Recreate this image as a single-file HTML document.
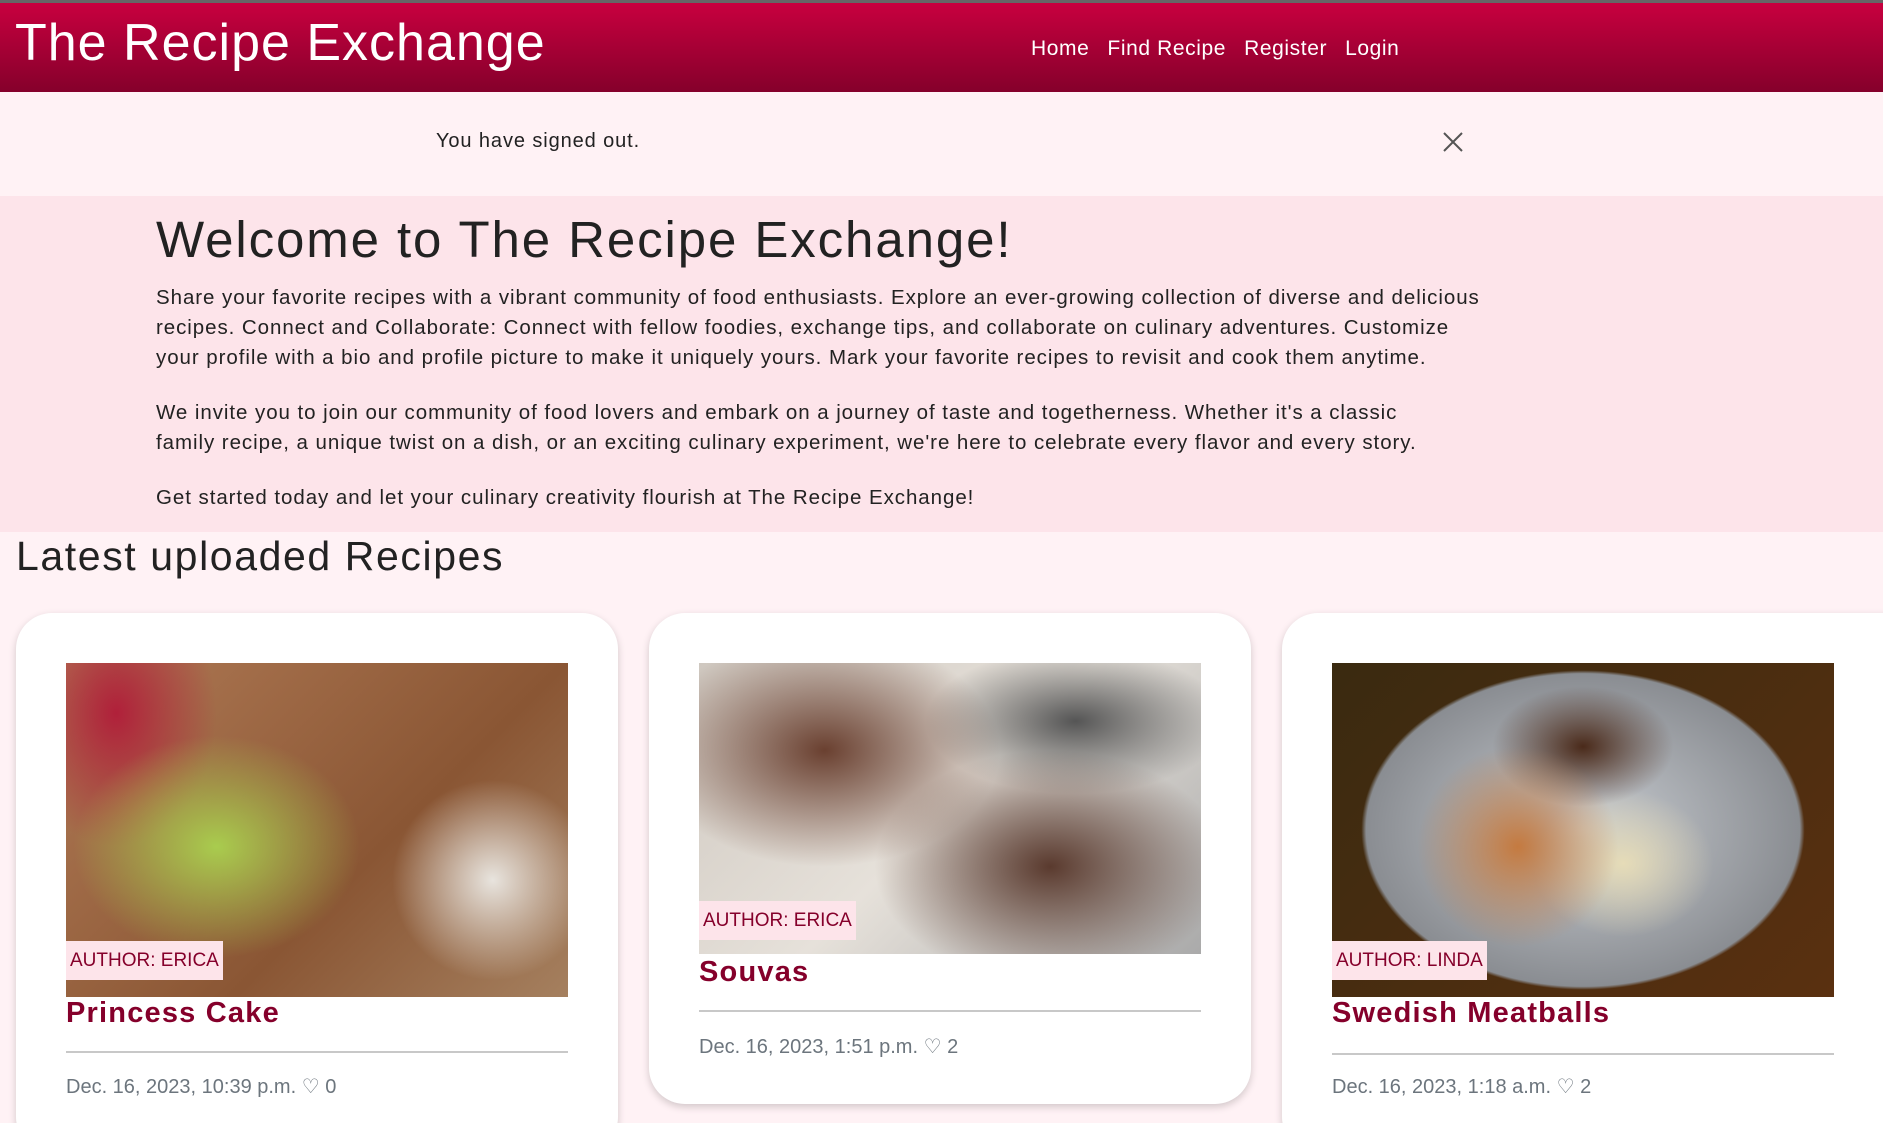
<!DOCTYPE html>
<html style="overflow:hidden"><head><meta charset="utf-8"><style>
*{margin:0;padding:0;box-sizing:border-box}
html,body{width:1883px;height:1123px;overflow:hidden}
body{background:#fff2f5;font-family:"Liberation Sans",sans-serif;position:relative}
.nav{position:absolute;left:0;top:0;width:1883px;height:92px;background:linear-gradient(#c8003f,#85002b);border-top:3px solid #666}
.brand{position:absolute;left:15px;top:10px;font-size:52px;color:#fff;letter-spacing:1px}
.links{position:absolute;left:1031px;top:34px;font-size:21px;color:#fff;letter-spacing:0.6px}
.links span{margin-right:18px}
.alert{position:absolute;left:0;top:92px;width:1883px;height:104px;background:#fff2f5}
.alert p{position:absolute;left:436px;top:38px;font-size:20px;color:#222;letter-spacing:0.9px}
.hero{position:absolute;left:0;top:196px;width:1883px;height:336px;background:#fde4ea}
.hero h1{position:absolute;left:156px;top:14px;font-size:51px;font-weight:normal;color:#222;letter-spacing:1.9px}
.hero p{position:absolute;left:156px;font-size:20.5px;line-height:30px;color:#222;width:1700px;letter-spacing:0.94px;white-space:nowrap}
h2{position:absolute;left:16px;top:533px;font-size:41px;font-weight:normal;color:#222;letter-spacing:1.6px}
.card{position:absolute;top:613px;width:602px;background:#fff;border-radius:36px;box-shadow:0 3px 8px rgba(0,0,0,.18)}
.img{position:absolute;left:50px;top:50px;width:502px}
.badge{position:absolute;left:50px;background:#fde4ea;color:#85002b;font-size:19px;padding:9px 4px;height:39px}
.title{position:absolute;left:50px;font-size:29px;font-weight:bold;color:#85002b;letter-spacing:1.2px}
.hr{position:absolute;left:50px;width:502px;height:2px;background:#c8c8c8}
.date{position:absolute;left:50px;font-size:20px;color:#6c757d}
</style></head><body>
<div class="nav"><div class="brand">The Recipe Exchange</div>
<div class="links"><span>Home</span><span>Find Recipe</span><span>Register</span><span>Login</span></div></div>
<div class="alert"><p>You have signed out.</p>
<svg style="position:absolute;left:1443px;top:40px" width="20" height="20" viewBox="0 0 20 20"><path d="M1 1L19 19M19 1L1 19" stroke="#555" stroke-width="2"/></svg></div>
<div class="hero"><h1>Welcome to The Recipe Exchange!</h1>
<p style="top:87px">Share your favorite recipes with a vibrant community of food enthusiasts. Explore an ever-growing collection of diverse and delicious<br>recipes. Connect and Collaborate: Connect with fellow foodies, exchange tips, and collaborate on culinary adventures. Customize<br>your profile with a bio and profile picture to make it uniquely yours. Mark your favorite recipes to revisit and cook them anytime.</p>
<p style="top:202px">We invite you to join our community of food lovers and embark on a journey of taste and togetherness. Whether it's a classic<br>family recipe, a unique twist on a dish, or an exciting culinary experiment, we're here to celebrate every flavor and every story.</p>
<p style="top:287px">Get started today and let your culinary creativity flourish at The Recipe Exchange!</p></div>
<h2>Latest uploaded Recipes</h2>

<div class="card" style="left:16px;height:540px">
<div class="img" style="height:334px;background:radial-gradient(ellipse 30% 35% at 30% 55%,#a9cc4e,transparent 95%),radial-gradient(ellipse 20% 40% at 10% 15%,#b0203a,transparent),radial-gradient(ellipse 20% 30% at 85% 65%,#e8e4de,transparent),linear-gradient(135deg,#b07a55,#8a5634 60%,#a5805f)"></div>
<div class="badge" style="top:328px">AUTHOR: ERICA</div>
<div class="title" style="top:384px">Princess Cake</div>
<div class="hr" style="top:438px"></div>
<div class="date" style="top:461px">Dec. 16, 2023, 10:39 p.m. ♡ 0</div></div>

<div class="card" style="left:649px;height:491px">
<div class="img" style="height:291px;background:radial-gradient(ellipse 35% 40% at 25% 30%,#6a4030,transparent),radial-gradient(ellipse 35% 40% at 70% 70%,#5a3a2e,transparent),radial-gradient(ellipse 30% 25% at 75% 20%,#555,transparent),linear-gradient(135deg,#cfc8c0,#e6e1da 50%,#aaa)"></div>
<div class="badge" style="top:288px">AUTHOR: ERICA</div>
<div class="title" style="top:343px">Souvas</div>
<div class="hr" style="top:397px"></div>
<div class="date" style="top:421px">Dec. 16, 2023, 1:51 p.m. ♡ 2</div></div>

<div class="card" style="left:1282px;width:640px;height:540px">
<div class="img" style="height:334px;background:radial-gradient(ellipse 20% 30% at 37% 55%,#c47a40,transparent),radial-gradient(ellipse 18% 18% at 50% 25%,#4a2a1a,transparent),radial-gradient(ellipse 18% 22% at 58% 60%,#e6dcb8,transparent),radial-gradient(ellipse 48% 52% at 50% 50%,#c9cdd2,#8a8d92 90%,transparent 92%),linear-gradient(135deg,#3a2a10,#5a3010)"></div>
<div class="badge" style="top:328px">AUTHOR: LINDA</div>
<div class="title" style="top:384px">Swedish Meatballs</div>
<div class="hr" style="top:440px"></div>
<div class="date" style="top:461px">Dec. 16, 2023, 1:18 a.m. ♡ 2</div></div>
</body></html>
